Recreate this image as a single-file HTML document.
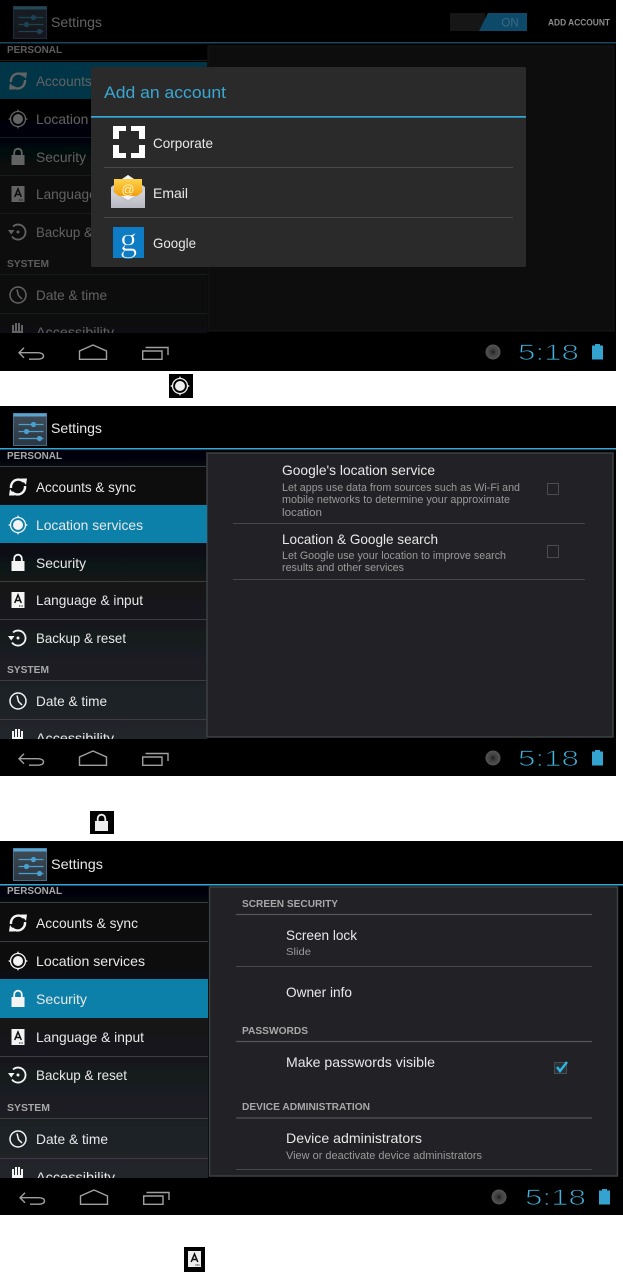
<!DOCTYPE html>
<html><head><meta charset="utf-8"><title>Settings</title>
<style>
html,body{margin:0;padding:0;background:#fff;width:623px;height:1272px;overflow:hidden}
svg{display:block;position:absolute;left:0;top:0}
text{font-family:"Liberation Sans",sans-serif}
.r{font-size:14px;fill:#e8e8e8}
.l{font-size:10.5px;font-weight:bold;fill:#a8a8a8}
.t{font-size:14px;fill:#e8e8e8}
.d{font-size:11px;fill:#9a9a9a}
.c{font-size:22px;fill:#3fb4de;stroke:#000;stroke-width:.85px}
</style></head><body>
<svg width="623" height="1272" viewBox="0 0 623 1272" xmlns="http://www.w3.org/2000/svg">
<defs>
<linearGradient id="side" x1="0" y1="0" x2="0" y2="1"><stop offset="0" stop-color="#050507"/><stop offset="1" stop-color="#22262b"/></linearGradient>
<linearGradient id="ic" x1="0" y1="0" x2="0" y2="1"><stop offset="0" stop-color="#3f4d58"/><stop offset="1" stop-color="#2c3640"/></linearGradient>
<linearGradient id="env" x1="0" y1="0" x2="0" y2="1"><stop offset="0" stop-color="#d8d8dc"/><stop offset="1" stop-color="#b8b8c2"/></linearGradient>
<linearGradient id="yel" x1="0" y1="0" x2="0" y2="1"><stop offset="0" stop-color="#ffd34a"/><stop offset="1" stop-color="#f0a010"/></linearGradient>
<filter id="b" x="-2%" y="-2%" width="104%" height="104%"><feGaussianBlur stdDeviation="0.3"/></filter>
<g id="app">
<rect x="0" y="0" width="33" height="32" fill="url(#ic)" stroke="#3a6f92" stroke-width="1"/>
<rect x="0" y="0" width="33" height="3" fill="#5aa6d0"/>
<g stroke="#4a9fd0" stroke-width="1.2" fill="#4a9fd0"><path d="M5 11H30M5 18H30M5 25H30"/><circle cx="20" cy="11" r="2"/><circle cx="13" cy="18" r="2"/><circle cx="26" cy="25" r="2"/></g>
</g>
<g id="sync" fill="none" stroke="currentColor" stroke-width="2.4"><path d="M-7 1A7.5 7.5 0 0 1 6 -5"/><path d="M7 -1A7.5 7.5 0 0 1 -6 5"/><path d="M3 -8.5L9 -8.5 8 -2Z" fill="currentColor" stroke="none"/><path d="M-3 8.5L-9 8.5 -8 2Z" fill="currentColor" stroke="none"/></g>
<g id="loc" fill="currentColor"><circle r="5"/><circle r="7.5" fill="none" stroke="currentColor" stroke-width="1.3"/><path d="M-1.2 -7.5L0 -10 1.2 -7.5ZM-1.2 7.5L0 10 1.2 7.5ZM-7.5 -1.2L-10 0 -7.5 1.2ZM7.500 -1.2L10 0 7.500 1.2Z"/></g>
<g id="lock"><rect x="-6.500" y="-2" width="13" height="10" fill="currentColor"/><path d="M-3.800 -2V-4.500A3.800 3.800 0 0 1 3.800 -4.500V-2" fill="none" stroke="currentColor" stroke-width="1.800"/></g>
<g id="lang"><rect x="-6.500" y="-8" width="13" height="16" fill="currentColor"/><path d="M-3.300 3L0 -5 3.300 3M-2 .5H2" fill="none" stroke="#111" stroke-width="1.500"/><path d="M1 6H5" stroke="#111" stroke-width="1" stroke-dasharray="1 .6"/></g>
<g id="back" fill="none" stroke="currentColor" stroke-width="1.800"><path d="M-5 -5.500A7.500 7.500 0 1 1 -6 4.500"/><path d="M-10 -2H-3.500L-6.800 2.500Z" fill="currentColor" stroke="none"/><circle r="1.500" fill="currentColor" stroke="none"/></g>
<g id="clk" fill="none" stroke="currentColor" stroke-width="1.500"><circle r="8"/><path d="M-1 -5.500L0.500 0.500 4 4"/></g>
<g id="hand" fill="currentColor"><rect x="-6" y="-6" width="2" height="7"/><rect x="-3" y="-8" width="2" height="9"/><rect x="0" y="-8" width="2" height="9"/><rect x="3" y="-6" width="2" height="7"/><rect x="-6" y="0" width="11" height="8"/></g>
<g id="nav" fill="none" stroke="#a0a0a0" stroke-width="1.400">
<path d="M19 .7H37Q43.500 .7 43.500 4Q43.500 7.200 37 7.200H29M24 -4.300L19 .7 24 5.700"/>
<path d="M79.500 7.300V-1L93 -7 106.500 -1V7.300Z"/>
<path d="M142.700 -1H162V7.300H142.700ZM145.500 -4.500H168V3"/>
</g>
<g id="bat" fill="#36a3cf"><rect x="0" y="1.500" width="11" height="14"/><rect x="3" y="0" width="5" height="2"/></g>
<radialGradient id="dot"><stop offset="0" stop-color="#1a1a1a"/><stop offset=".3" stop-color="#3a3a3a"/><stop offset="1" stop-color="#555"/></radialGradient>
</defs>

<g filter="url(#b)">
<!-- SCREEN 1 -->
<rect x="0" y="0" width="616" height="371" fill="#000"/>
<g opacity=".42">
<rect x="0" y="44" width="207" height="289" fill="url(#side)"/>
<rect x="208" y="46" width="406" height="285" fill="#212226" stroke="#2c2e31"/>
<rect x="0" y="62" width="207" height="37" fill="#0a80aa"/>
<path d="M0 60.500H207M0 137.500H207M0 175.500H207M0 213.500H207M0 274.500H207M0 313.500H207" stroke="#3d4145"/>
<use href="#app" x="13.500" y="6.500"/>
<g color="#eee">
<use href="#sync" x="18" y="81"/><use href="#loc" x="18" y="119"/><use href="#lock" x="18" y="157"/><use href="#lang" x="18" y="194"/><use href="#back" x="18" y="232"/><use href="#clk" x="18" y="295"/><use href="#hand" x="18" y="331"/>
</g>
<text class="r" x="51" y="27" textLength="51" lengthAdjust="spacingAndGlyphs">Settings</text>
<text class="l" x="7" y="53" textLength="55" lengthAdjust="spacingAndGlyphs" style="fill:#ddd">PERSONAL</text>
<text class="r" x="36" y="86" textLength="100" lengthAdjust="spacingAndGlyphs">Accounts &amp; sync</text>
<text class="r" x="36" y="124" textLength="107" lengthAdjust="spacingAndGlyphs">Location services</text>
<text class="r" x="36" y="162" textLength="50" lengthAdjust="spacingAndGlyphs">Security</text>
<text class="r" x="36" y="199" textLength="107" lengthAdjust="spacingAndGlyphs">Language &amp; input</text>
<text class="r" x="36" y="237" textLength="90" lengthAdjust="spacingAndGlyphs">Backup &amp; reset</text>
<text class="l" x="7" y="267" textLength="42" lengthAdjust="spacingAndGlyphs" style="fill:#ddd">SYSTEM</text>
<text class="r" x="36" y="300" textLength="71" lengthAdjust="spacingAndGlyphs">Date &amp; time</text>
<text class="r" x="36" y="337" textLength="78" lengthAdjust="spacingAndGlyphs">Accessibility</text>
<rect x="0" y="42" width="616" height="1.500" fill="#2fb0e0"/>
</g>
<rect x="450" y="13" width="35" height="18" fill="#151515"/>
<path d="M488 13H527V31H479Z" fill="#0f4a68"/>
<text x="510" y="26.500" text-anchor="middle" font-size="11.500" fill="#3d6a80">ON</text>
<text x="548" y="25.500" font-size="9.500" font-weight="bold" fill="#8c8c8c" textLength="62" lengthAdjust="spacingAndGlyphs">ADD ACCOUNT</text>
<rect x="0" y="333" width="616" height="38" fill="#000"/>
<rect x="91" y="67" width="435" height="200" rx="1.500" fill="#2a2a2b"/>
<rect x="91" y="116" width="435" height="1.700" fill="#33a8d6"/>
<text x="104" y="98" font-size="17" fill="#3aa6d2" textLength="122" lengthAdjust="spacingAndGlyphs">Add an account</text>
<path d="M104 167.500H513M104 217.500H513" stroke="#484848"/>
<path fill="#fff" d="M113 126H126V131H119V139H113ZM131 126H145V139H139V131H131ZM113 145H119V153H126V158H113ZM139 145H145V158H131V153H139Z"/>
<path d="M111 187L128 175 145 187V208H111Z" fill="url(#env)"/>
<path d="M128 175L116 183V193L128 200 140 193V183Z" fill="#f4f4f4"/>
<rect x="114" y="179" width="28" height="17" fill="url(#yel)"/>
<path d="M111 190L128 203 145 190V208H111Z" fill="url(#env)"/>
<text x="128" y="194" text-anchor="middle" font-size="13" fill="#fff3c0">@</text>
<rect x="113" y="227" width="31" height="31" fill="#0f7cc4"/>
<text x="128.500" y="251" text-anchor="middle" style="font-family:'Liberation Serif',serif;stroke:#0f7cc4;stroke-width:.7px" font-size="35" fill="#fff">g</text>
<text class="t" x="153" y="148" textLength="60" lengthAdjust="spacingAndGlyphs">Corporate</text>
<text class="t" x="153" y="198" textLength="35" lengthAdjust="spacingAndGlyphs">Email</text>
<text class="t" x="153" y="248" textLength="43" lengthAdjust="spacingAndGlyphs">Google</text>
<use href="#nav" y="352"/>
<circle cx="493" cy="352" r="7.500" fill="url(#dot)"/>
<text class="c" x="518" y="360" textLength="61" lengthAdjust="spacingAndGlyphs">5:18</text>
<use href="#bat" x="592" y="344"/>

<!-- icon 1 -->
<rect x="169" y="374" width="24" height="24" fill="#000"/>
<g color="#eee"><use href="#loc" x="180" y="386"/></g>

<!-- SCREEN 2 -->
<rect x="0" y="406" width="616" height="370" fill="#000"/>
<rect x="0" y="449" width="207" height="291" fill="url(#side)"/>
<rect x="207" y="453" width="406" height="284" fill="#212226" stroke="#3d4043" stroke-width="1.500"/>
<rect x="0" y="505" width="207" height="38" fill="#0a80aa"/>
<path d="M0 466.500H207M0 581.500H207M0 619.500H207M0 680.500H207M0 719.500H207" stroke="#3a3e42"/>
<use href="#app" x="13.500" y="413.500"/>
<g color="#f4f4f4">
<use href="#sync" x="18" y="487"/><use href="#loc" x="18" y="525"/><use href="#lock" x="18" y="563"/><use href="#lang" x="18" y="600"/><use href="#back" x="18" y="638"/><use href="#clk" x="18" y="701"/><use href="#hand" x="18" y="737"/>
</g>
<text class="r" x="51" y="433" textLength="51" lengthAdjust="spacingAndGlyphs">Settings</text>
<rect x="0" y="448" width="616" height="1.500" fill="#33a8d6"/>
<text class="l" x="7" y="459" textLength="55" lengthAdjust="spacingAndGlyphs">PERSONAL</text>
<text class="r" x="36" y="492" textLength="100" lengthAdjust="spacingAndGlyphs">Accounts &amp; sync</text>
<text class="r" x="36" y="530" textLength="107" lengthAdjust="spacingAndGlyphs">Location services</text>
<text class="r" x="36" y="568" textLength="50" lengthAdjust="spacingAndGlyphs">Security</text>
<text class="r" x="36" y="605" textLength="107" lengthAdjust="spacingAndGlyphs">Language &amp; input</text>
<text class="r" x="36" y="643" textLength="90" lengthAdjust="spacingAndGlyphs">Backup &amp; reset</text>
<text class="l" x="7" y="673" textLength="42" lengthAdjust="spacingAndGlyphs">SYSTEM</text>
<text class="r" x="36" y="706" textLength="71" lengthAdjust="spacingAndGlyphs">Date &amp; time</text>
<text class="r" x="36" y="743" textLength="78" lengthAdjust="spacingAndGlyphs">Accessibility</text>
<text class="t" x="282" y="475" textLength="153" lengthAdjust="spacingAndGlyphs">Google's location service</text>
<text class="d" x="282" y="491" textLength="238" lengthAdjust="spacingAndGlyphs">Let apps use data from sources such as Wi-Fi and</text>
<text class="d" x="282" y="503" textLength="228" lengthAdjust="spacingAndGlyphs">mobile networks to determine your approximate</text>
<text class="d" x="282" y="516" textLength="40" lengthAdjust="spacingAndGlyphs">location</text>
<path d="M233 523.500H585M233 579.500H585" stroke="#45484b"/>
<text class="t" x="282" y="544" textLength="156" lengthAdjust="spacingAndGlyphs">Location &amp; Google search</text>
<text class="d" x="282" y="559" textLength="224" lengthAdjust="spacingAndGlyphs">Let Google use your location to improve search</text>
<text class="d" x="282" y="571" textLength="122" lengthAdjust="spacingAndGlyphs">results and other services</text>
<rect x="547.500" y="483.500" width="11" height="11" fill="none" stroke="#4a4d50"/>
<rect x="547.500" y="545.500" width="11" height="12" fill="none" stroke="#4a4d50"/>
<rect x="0" y="739" width="616" height="37" fill="#000"/>
<use href="#nav" y="758"/>
<circle cx="493" cy="758" r="7.500" fill="url(#dot)"/>
<text class="c" x="518" y="766" textLength="61" lengthAdjust="spacingAndGlyphs">5:18</text>
<use href="#bat" x="592" y="750"/>

<!-- icon 2 -->
<rect x="90" y="811" width="24" height="23" fill="#000"/>
<g color="#eee"><use href="#lock" x="101.500" y="823"/></g>

<!-- SCREEN 3 -->
<rect x="0" y="841" width="623" height="374" fill="#000"/>
<rect x="0" y="885" width="208" height="293" fill="url(#side)"/>
<rect x="209.500" y="887" width="408" height="289" fill="#212226" stroke="#3d4043" stroke-width="1.500"/>
<rect x="0" y="979" width="208" height="39" fill="#0a80aa"/>
<path d="M0 902.500H208M0 941.500H208M0 1056.500H208M0 1118.500H208M0 1158.500H208" stroke="#3a3e42"/>
<use href="#app" x="13.500" y="848.500"/>
<g color="#f4f4f4">
<use href="#sync" x="18" y="923"/><use href="#loc" x="18" y="961"/><use href="#lock" x="18" y="999"/><use href="#lang" x="18" y="1037"/><use href="#back" x="18" y="1075"/><use href="#clk" x="18" y="1139"/><use href="#hand" x="18" y="1175"/>
</g>
<text class="r" x="51" y="869" textLength="52" lengthAdjust="spacingAndGlyphs">Settings</text>
<rect x="0" y="884" width="623" height="1.500" fill="#33a8d6"/>
<text class="l" x="7" y="894" textLength="55" lengthAdjust="spacingAndGlyphs">PERSONAL</text>
<text class="r" x="36" y="928" textLength="102" lengthAdjust="spacingAndGlyphs">Accounts &amp; sync</text>
<text class="r" x="36" y="966" textLength="109" lengthAdjust="spacingAndGlyphs">Location services</text>
<text class="r" x="36" y="1004" textLength="51" lengthAdjust="spacingAndGlyphs">Security</text>
<text class="r" x="36" y="1042" textLength="108" lengthAdjust="spacingAndGlyphs">Language &amp; input</text>
<text class="r" x="36" y="1080" textLength="91" lengthAdjust="spacingAndGlyphs">Backup &amp; reset</text>
<text class="l" x="7" y="1111" textLength="43" lengthAdjust="spacingAndGlyphs">SYSTEM</text>
<text class="r" x="36" y="1144" textLength="72" lengthAdjust="spacingAndGlyphs">Date &amp; time</text>
<text class="r" x="36" y="1182" textLength="79" lengthAdjust="spacingAndGlyphs">Accessibility</text>
<text class="l" x="242" y="907" textLength="96" lengthAdjust="spacingAndGlyphs">SCREEN SECURITY</text>
<path d="M236 914.500H592M236 1041.500H592M236 1118H592" stroke="#54575a" stroke-width="1.300"/>
<path d="M236 966.500H592M236 1169.500H592" stroke="#45484b"/>
<text class="t" x="286" y="940" textLength="71" lengthAdjust="spacingAndGlyphs">Screen lock</text>
<text class="d" x="286" y="955" style="font-size:10px" textLength="25" lengthAdjust="spacingAndGlyphs">Slide</text>
<text class="t" x="286" y="997" textLength="66" lengthAdjust="spacingAndGlyphs">Owner info</text>
<text class="l" x="242" y="1034" textLength="66" lengthAdjust="spacingAndGlyphs">PASSWORDS</text>
<text class="t" x="286" y="1067" textLength="149" lengthAdjust="spacingAndGlyphs">Make passwords visible</text>
<rect x="554.500" y="1062.500" width="12" height="11" fill="#263038" stroke="#4a4d50"/>
<path d="M557 1067L560 1071 567 1062" fill="none" stroke="#33b5e5" stroke-width="2.400"/>
<text class="l" x="242" y="1110" textLength="128" lengthAdjust="spacingAndGlyphs">DEVICE ADMINISTRATION</text>
<text class="t" x="286" y="1143" textLength="136" lengthAdjust="spacingAndGlyphs">Device administrators</text>
<text class="d" x="286" y="1159" textLength="196" lengthAdjust="spacingAndGlyphs">View or deactivate device administrators</text>
<rect x="0" y="1178" width="623" height="37" fill="#000"/>
<use href="#nav" x="1" y="1197"/>
<circle cx="499" cy="1197" r="7.500" fill="url(#dot)"/>
<text class="c" x="525" y="1205" textLength="61" lengthAdjust="spacingAndGlyphs">5:18</text>
<use href="#bat" x="599" y="1189"/>

<!-- icon 3 -->
<rect x="184" y="1247" width="21" height="25" fill="#000"/>
<g color="#eee"><use href="#lang" x="194.500" y="1259"/></g>
</g>
</svg>
</body></html>
